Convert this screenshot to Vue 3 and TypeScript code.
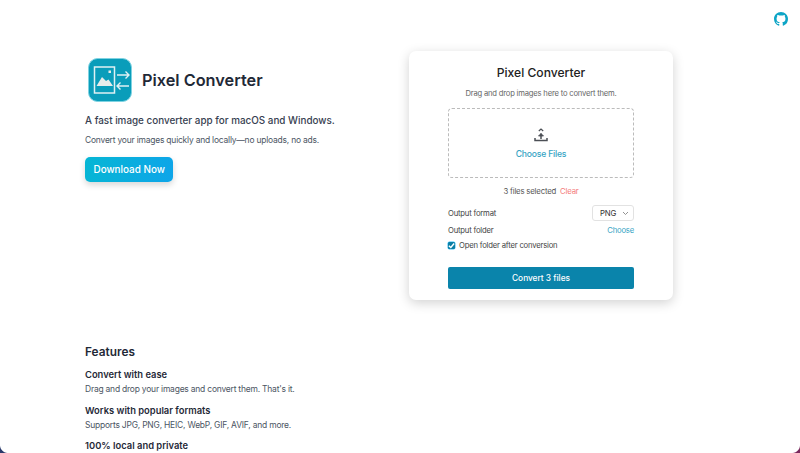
<script setup lang="ts">
const features = [
  { title: 'Convert with ease', text: "Drag and drop your images and convert them. That's it." },
  { title: 'Works with popular formats', text: 'Supports JPG, PNG, HEIC, WebP, GIF, AVIF, and more.' },
  { title: '100% local and private', text: '' },
]
</script>

<template>
  <div class="page">
    <a class="github" aria-label="GitHub">
      <svg width="14" height="14" viewBox="0 0 16 16">
        <path
          fill="#0ea5c6"
          d="M8 0C3.58 0 0 3.58 0 8c0 3.54 2.29 6.53 5.47 7.59.4.07.55-.17.55-.38 0-.19-.01-.82-.01-1.49-2.01.37-2.53-.49-2.69-.94-.09-.23-.48-.94-.82-1.13-.28-.15-.68-.52-.01-.53.63-.01 1.08.58 1.23.82.72 1.21 1.87.87 2.33.66.07-.52.28-.87.51-1.07-1.78-.2-3.64-.89-3.64-3.95 0-.87.31-1.59.82-2.15-.08-.2-.36-1.02.08-2.12 0 0 .67-.21 2.2.82.64-.18 1.32-.27 2-.27s1.36.09 2 .27c1.53-1.04 2.2-.82 2.2-.82.44 1.1.16 1.92.08 2.12.51.56.82 1.27.82 2.15 0 3.07-1.87 3.75-3.65 3.95.29.25.54.73.54 1.48 0 1.07-.01 1.93-.01 2.2 0 .21.15.46.55.38A8.01 8.01 0 0 0 16 8c0-4.42-3.58-8-8-8z"
        />
      </svg>
    </a>

    <section class="hero">
      <div class="intro">
        <div class="brand">
          <svg class="logo" width="44" height="44" viewBox="0 0 44 44">
            <rect x="0.500" y="0.500" width="43" height="43" rx="9" fill="#0a9dba" stroke="#7fd3e2" stroke-width="1" />
            <rect x="6.500" y="9" width="20" height="26" fill="none" stroke="#dff1f4" stroke-width="1.500" />
            <path d="M8.500 28 L14 19 L18 23 L20.500 21.500 L25 28 Z" fill="#e8ecea" />
            <rect x="20.500" y="12.500" width="2.500" height="2.500" fill="#e8ecea" />
            <path d="M29 17H41M37.500 13.500 41 17 37.500 20.500M41 28H29M32.500 24.500 29 28 32.500 31.500" fill="none" stroke="#dff1f4" stroke-width="1.400" />
          </svg>
          <h1>Pixel Converter</h1>
        </div>
        <p class="tagline">A fast image converter app for macOS and Windows.</p>
        <p class="sub">Convert your images quickly and locally—no uploads, no ads.</p>
        <a class="download">Download Now</a>
      </div>

      <div class="card">
        <h2>Pixel Converter</h2>
        <p class="hint">Drag and drop images here to convert them.</p>
        <div class="drop">
          <svg width="14" height="14" viewBox="0 0 14 14" fill="none" stroke="#4b4f55" stroke-width="1.500">
            <path d="M4.800 3 7 1 9.200 3" stroke-width="1.200" />
            <path d="M1 10V12.500H13V10" />
            <path d="M7 5.500V11" />
            <path d="M4.500 8 7 5.500 9.500 8Z" fill="#4b4f55" stroke-width="0.800" />
          </svg>
          <span>Choose Files</span>
        </div>
        <div class="selected">3 files selected <span class="clear">Clear</span></div>
        <div class="row format">
          <label>Output format</label>
          <div class="select">PNG
            <svg width="7" height="5" viewBox="0 0 7 5" fill="none" stroke="#777" stroke-width="0.800"><path d="M1 1 3.500 3.500 6 1" /></svg>
          </div>
        </div>
        <div class="row folder">
          <label>Output folder</label>
          <a class="choose">Choose</a>
        </div>
        <div class="check">
          <span class="box">
            <svg width="7" height="7" viewBox="0 0 8 8" fill="none" stroke="#fff" stroke-width="1.600"><path d="M1 4.200 3.200 6.300 7 1.700" /></svg>
          </span>
          Open folder after conversion
        </div>
        <button class="convert">Convert 3 files</button>
      </div>
    </section>

    <section class="features">
      <h3>Features</h3>
      <div v-for="f in features" :key="f.title" class="feature">
        <h4>{{ f.title }}</h4>
        <p v-if="f.text">{{ f.text }}</p>
      </div>
    </section>

    <i class="corner left"></i>
    <i class="corner right"></i>
  </div>
</template>

<style scoped>
.page {
  position: relative;
  box-sizing: border-box;
  width: 800px;
  height: 453px;
  overflow: hidden;
  padding: 51px 127px 0 85px;
  background: #fff;
  font-family: Inter, "Liberation Sans", sans-serif;
  color: #1f2937;
}

.github {
  position: absolute;
  top: 12px;
  right: 12px;
  display: flex;
}

.hero {
  display: flex;
  justify-content: space-between;
  align-items: flex-start;
}

.intro {
  padding-top: 7px;
}

.brand {
  display: flex;
  align-items: center;
  gap: 10px;
  padding-left: 3px;
}

h1 {
  margin: 0;
  font-size: 16.300px;
  font-weight: 600;
  color: #1f2937;
}

.tagline {
  margin: 11px 0 0;
  font-size: 9.900px;
  line-height: 15px;
  font-weight: 500;
  color: #374151;
}

.sub {
  margin: 5px 0 0;
  font-size: 8.470px;
  letter-spacing: -0.025em;
  line-height: 14px;
  color: #4b5563;
}

.download {
  display: inline-block;
  margin-top: 10px;
  padding: 0 8.500px;
  height: 25px;
  line-height: 25px;
  border-radius: 5px;
  background: linear-gradient(100deg, #06b6d4, #0ea5e9);
  box-shadow: 0 3px 6px rgba(0, 0, 0, 0.16);
  color: #fff;
  font-size: 9.900px;
  font-weight: 500;
}

.card {
  box-sizing: border-box;
  width: 264px;
  height: 249px;
  padding: 14px 39px 0;
  border-radius: 7px;
  background: #fff;
  box-shadow: 0 3px 12px rgba(0, 0, 0, 0.18);
  color: #333;
  display: flex;
  flex-direction: column;
  font-size: 7.680px;
  letter-spacing: -0.025em;
}

h2 {
  margin: 0;
  text-align: center;
  font-size: 12.100px;
  letter-spacing: 0;
  line-height: 15px;
  font-weight: 500;
  color: #222;
}

.hint {
  margin: 8px 0 0;
  text-align: center;
  line-height: 12px;
  font-size: 7.630px;
  color: #666;
}

.drop {
  box-sizing: border-box;
  height: 70px;
  margin-top: 8px;
  border: 1px dashed #bbb;
  border-radius: 4px;
  display: flex;
  flex-direction: column;
  align-items: center;
  padding-top: 19px;
  gap: 6px;
}

.drop span {
  color: #34a3c3;
  font-size: 8.600px;
  line-height: 12px;
  font-weight: 500;
}

.selected {
  margin-top: 7.500px;
  text-align: center;
  line-height: 11px;
  font-size: 7.790px;
  color: #555;
}

.clear {
  margin-left: 2px;
  color: #f47a7a;
}

.row {
  display: flex;
  justify-content: space-between;
  align-items: center;
  color: #444;
}

.format {
  margin-top: 8.500px;
  height: 16px;
}

.select {
  box-sizing: border-box;
  width: 42px;
  height: 16px;
  padding: 0 4px 0 7px;
  border: 1px solid #e2e2e2;
  border-radius: 3px;
  display: flex;
  justify-content: space-between;
  align-items: center;
  font-size: 7.790px;
  color: #333;
}

.folder {
  margin-top: 2px;
  height: 14px;
}

.choose {
  color: #34a3c3;
}

.check {
  display: flex;
  align-items: center;
  gap: 4px;
  margin-top: 1px;
  height: 14px;
  color: #444;
}

.box {
  width: 7px;
  height: 7px;
  border-radius: 1.500px;
  background: #0a7ea4;
  box-shadow: 0 0 0 0.500px #38bdf8;
  display: flex;
  align-items: center;
  justify-content: center;
}

.convert {
  height: 21.500px;
  margin-top: 15px;
  border: 0;
  border-radius: 2px;
  background: #0a84ab;
  color: #fff;
  font: 500 8.300px Inter, "Liberation Sans", sans-serif;
}

.features {
  margin-top: 44px;
}

h3 {
  margin: 0;
  font-size: 11.850px;
  line-height: 16px;
  font-weight: 600;
  color: #1f2937;
}

.feature {
  margin-top: 8px;
}

.feature + .feature {
  margin-top: 8.500px;
}

h4 {
  margin: 0;
  font-size: 9.400px;
  line-height: 13px;
  font-weight: 600;
  color: #1f2937;
}

.feature p {
  margin: 2px 0 0;
  font-size: 8.470px;
  letter-spacing: -0.025em;
  line-height: 12px;
  color: #4b5563;
}

.corner {
  position: absolute;
  bottom: 0;
  width: 8px;
  height: 8px;
}

.corner.left {
  left: 0;
  background: radial-gradient(circle at 100% 0, transparent 7.500px, #2b3a6b 8.500px);
}

.corner.right {
  right: 0;
  background: radial-gradient(circle at 0 0, transparent 7.500px, #7b2a5e 8.500px);
}
</style>
